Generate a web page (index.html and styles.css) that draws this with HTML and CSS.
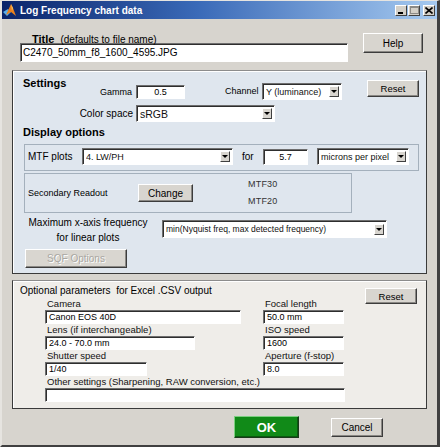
FILE: index.html
```html
<!DOCTYPE html>
<html>
<head>
<meta charset="utf-8">
<title>Log Frequency chart data</title>
<link rel="stylesheet" href="styles.css">
</head>
<body>
<div class="window">
  <div class="titlebar">
    <svg class="app-icon" width="14" height="14" viewBox="0 0 14 14">
      <polygon points="0,9 5,6 8,9 4,13" fill="#5aaee8"/>
      <polygon points="3,12 8,1 10,5 13,13 8,9" fill="#e8801e"/>
      <polygon points="8,1 10,5 9,8" fill="#f8c060"/>
    </svg>
    <span class="title-text">Log Frequency chart data</span>
    <div class="wctrls">
      <span class="wbtn wmin"><svg width="8" height="8" viewBox="0 0 8 8"><rect x="1" y="6" width="5" height="2" fill="#000"/></svg></span>
      <span class="wbtn wmax"><svg width="9" height="8" viewBox="0 0 9 8"><rect x="0.5" y="0.5" width="8" height="7" fill="none" stroke="#8c8a86"/><rect x="0" y="0" width="9" height="2" fill="#8c8a86"/></svg></span>
      <span class="wbtn wclose"><svg width="8" height="7" viewBox="0 0 8 7"><path d="M0.5 0.5 L7.5 6.5 M7.5 0.5 L0.5 6.5" stroke="#000" stroke-width="1.6"/></svg></span>
    </div>
  </div>

  <div class="top">
    <div class="title-col">
      <div class="title-label"><span class="bold-h">Title</span><span class="title-hint">(defaults to file name)</span></div>
      <div class="field title-in">C2470_50mm_f8_1600_4595.JPG</div>
    </div>
    <button class="btn help-btn">Help</button>
  </div>

  <div class="panel settings">
    <div class="row r1">
      <div class="bold-h settings-h">Settings</div>
      <span class="lbl gamma-lbl">Gamma</span>
      <div class="field gamma-in">0.5</div>
      <span class="lbl channel-lbl">Channel</span>
      <div class="select channel-sel"><span class="sel-text">Y (luminance)</span><span class="arrow"></span></div>
      <button class="btn reset1">Reset</button>
    </div>
    <div class="row r2">
      <span class="lbl cs-lbl">Color space</span>
      <div class="select cs-sel"><span class="sel-text">sRGB</span><span class="arrow"></span></div>
    </div>
    <div class="bold-h display-h">Display options</div>
    <div class="box mtf-box">
      <span class="lbl mtf-lbl">MTF plots</span>
      <div class="select mtf-sel"><span class="sel-text">4. LW/PH</span><span class="arrow"></span></div>
      <span class="lbl for-lbl">for</span>
      <div class="field pix-in">5.7</div>
      <div class="select unit-sel"><span class="sel-text">microns per pixel</span><span class="arrow"></span></div>
    </div>
    <div class="box sec-box">
      <span class="lbl sec-lbl">Secondary Readout</span>
      <button class="btn change-btn">Change</button>
      <div class="mtf-read">
        <span>MTF30</span>
        <span>MTF20</span>
      </div>
    </div>
    <div class="row maxrow">
      <div class="lbl max-lbl">Maximum x-axis frequency<br>for linear plots</div>
      <div class="select max-sel"><span class="sel-text">min(Nyquist freq, max detected frequency)</span><span class="arrow"></span></div>
    </div>
    <button class="btn sqf-btn" disabled>SQF Options</button>
  </div>

  <div class="panel optional">
    <div class="opt-head">Optional parameters&nbsp; for Excel .CSV output</div>
    <button class="btn reset2">Reset</button>
    <div class="fld f-camera"><span class="flbl">Camera</span><div class="field fin w-camera">Canon EOS 40D</div></div>
    <div class="fld f-focal"><span class="flbl">Focal length</span><div class="field fin w-right">50.0 mm</div></div>
    <div class="fld f-lens"><span class="flbl">Lens (if interchangeable)</span><div class="field fin w-lens">24.0 - 70.0 mm</div></div>
    <div class="fld f-iso"><span class="flbl">ISO speed</span><div class="field fin w-right">1600</div></div>
    <div class="fld f-shutter"><span class="flbl">Shutter speed</span><div class="field fin w-shutter">1/40</div></div>
    <div class="fld f-aperture"><span class="flbl">Aperture (f-stop)</span><div class="field fin w-right">8.0</div></div>
    <div class="fld f-other"><span class="flbl">Other settings (Sharpening, RAW conversion, etc.)</span><div class="field fin w-other"></div></div>
  </div>

  <div class="actions">
    <button class="btn ok-btn">OK</button>
    <button class="btn cancel-btn">Cancel</button>
  </div>
</div>
</body>
</html>
```

FILE: styles.css
```css
* { box-sizing: border-box; }

body {
  margin: 0;
  font-family: "Liberation Sans", Arial, sans-serif;
  color: #000;
  background: #d6d3cd;
}

.window {
  width: 440px;
  height: 447px;
  background: #d7d4ce;
  border-style: solid;
  border-width: 1px 3px 2px 2px;
  border-color: #e6e4e0 #404040 #404040 #e6e4e0;
  overflow: hidden;
}

/* title bar */
.titlebar {
  height: 18px;
  display: flex;
  align-items: center;
  background: linear-gradient(to right, #0a246a 0%, #3a6ab8 45%, #a6caf0 100%);
}
.app-icon { margin-left: 1px; flex: none; }
.title-text {
  margin-left: 3px;
  color: #fff;
  font-weight: bold;
  font-size: 10px;
  white-space: nowrap;
}
.wctrls {
  margin-left: auto;
  margin-right: 2px;
  display: flex;
}
.wbtn {
  width: 12px;
  height: 11px;
  background: #d4d0c8;
  border: 1px solid;
  border-color: #fff #404040 #404040 #fff;
  display: flex;
  align-items: center;
  justify-content: center;
}
.wmax { margin-left: 1px; }
.wclose { margin-left: 3px; }

/* generic controls */
.field {
  background: #fff;
  border: 1px solid;
  border-color: #6e6e6e #fff #fff #6e6e6e;
  box-shadow: inset 1px 1px 0 #2e2e2e;
  font-size: 9px;
  line-height: 12px;
  padding-left: 3px;
  white-space: nowrap;
  overflow: hidden;
}
.btn {
  font-family: "Liberation Sans", Arial, sans-serif;
  font-size: 10px;
  color: #000;
  background: #d8d5cf;
  border: 1px solid;
  border-color: #fff #3c3c3c #3c3c3c #fff;
  box-shadow: inset -1px -1px 0 #8a8884;
  padding: 0;
  margin: 0;
}
.select {
  background: #fff;
  border: 1px solid;
  border-color: #6e6e6e #fff #fff #6e6e6e;
  box-shadow: inset 1px 1px 0 #2e2e2e;
  display: flex;
  align-items: center;
  padding: 0 2px 0 3px;
}
.sel-text {
  flex: 1;
  font-size: 9px;
  white-space: nowrap;
  overflow: hidden;
  color: #111;
}
.arrow {
  flex: none;
  width: 10px;
  height: 11px;
  background: #d8d5cf;
  border: 1px solid;
  border-color: #fff #404040 #404040 #fff;
  display: flex;
  align-items: center;
  justify-content: center;
}
.arrow::after {
  content: "";
  border-left: 3px solid transparent;
  border-right: 3px solid transparent;
  border-top: 3px solid #000;
}
.lbl { font-size: 9px; white-space: nowrap; }
.bold-h { font-weight: bold; font-size: 11px; line-height: 13px; }

/* top row */
.top {
  height: 51px;
  display: flex;
  align-items: flex-start;
  padding: 10px 0 0 18px;
}
.title-col { width: 328px; }
.title-label { height: 14px; padding-left: 12px; white-space: nowrap; }
.title-hint { font-size: 10px; margin-left: 6px; }
.title-in { height: 19px; font-size: 10px; line-height: 17px; padding-left: 2px; }
.help-btn { width: 60px; height: 20px; margin: 4px 0 0 15px; }

/* panels */
.panel {
  margin-left: 10px;
  width: 415px;
  border: 1px solid;
}
.settings {
  height: 204px;
  background: #dfe6ee;
  border-color: #8c8c8c #3a3a3a #3a3a3a #3a3a3a;
  box-shadow: inset 1px 1px 0 #fff;
  padding-top: 6px;
}
.row { display: flex; align-items: flex-start; }
.r1 { height: 23px; }
.settings-h { width: 60px; margin-left: 10px; }
.gamma-lbl { width: 49px; text-align: right; margin-top: 8px; line-height: 14px; }
.gamma-in { width: 49px; height: 14px; margin: 8px 0 0 4px; text-align: center; padding-left: 0; }
.channel-lbl { width: 33px; margin: 6px 0 0 40px; line-height: 17px; }
.channel-sel { width: 80px; height: 17px; margin: 6px 0 0 4px; }
.reset1 { width: 52px; height: 17px; margin: 3px 0 0 25px; font-size: 9.5px; }

.r2 { margin-top: 5px; height: 17px; }
.cs-lbl { width: 120px; text-align: right; font-size: 10px; line-height: 17px; }
.cs-sel { width: 139px; height: 17px; margin-left: 3px; }
.cs-sel .sel-text { font-size: 10.5px; }

.display-h { margin: 4px 0 0 10px; }

.box {
  margin-left: 11px;
  border: 1px solid #a4b0bc;
  display: flex;
  align-items: flex-start;
}
.mtf-box { width: 395px; height: 27px; margin-top: 5px; padding: 3px 0 0 3px; }
.mtf-lbl { width: 54px; font-size: 10px; line-height: 17px; }
.mtf-sel { width: 151px; height: 17px; }
.for-lbl { width: 21px; margin-left: 9px; font-size: 10px; line-height: 17px; }
.pix-in { width: 45px; height: 16px; margin-top: 1px; text-align: center; padding-left: 0; line-height: 14px; }
.unit-sel { width: 92px; height: 17px; margin-left: 9px; }

.sec-box { width: 328px; height: 40px; margin-top: 2px; align-items: center; padding-left: 3px; }
.sec-lbl { width: 110px; }
.change-btn { width: 55px; height: 18px; }
.mtf-read { margin-left: 55px; display: flex; flex-direction: column; font-size: 9px; line-height: 17px; color: #333; letter-spacing: 0.2px; }

.maxrow { margin-top: 2px; height: 32px; }
.max-lbl { width: 120px; margin-left: 15px; text-align: center; font-size: 10px; line-height: 15px; }
.max-sel { width: 225px; height: 18px; margin: 5px 0 0 14px; }
.max-sel .sel-text { font-size: 8.5px; }

.sqf-btn {
  display: block;
  width: 102px;
  height: 19px;
  margin: 2px 0 0 12px;
  color: #a9a7a2;
  text-shadow: 1px 1px 0 #fff;
  background: #d9d6d0;
}

.optional {
  margin-top: 6px;
  height: 129px;
  background: #efede9;
  border-color: #8c8c8c #3a3a3a #3a3a3a #3a3a3a;
  box-shadow: inset 1px 1px 0 #fff;
  display: grid;
  grid-template-columns: 32px 218px 102px 52px;
  grid-template-rows: 17px 26px 26px 26px 26px;
}
.opt-head {
  grid-column: 1 / 4;
  grid-row: 1;
  padding: 3px 0 0 7px;
  font-size: 10px;
  line-height: 13px;
  white-space: nowrap;
}
.reset2 {
  grid-column: 4;
  grid-row: 1 / 3;
  align-self: start;
  width: 52px;
  height: 16px;
  margin-top: 7px;
  font-size: 9.5px;
}
.fld { display: flex; flex-direction: column; }
.flbl { font-size: 9.5px; line-height: 12px; height: 12px; white-space: nowrap; padding-left: 2px; color: #111; }
.fin { height: 14px; font-size: 9px; line-height: 12px; }
.f-camera { grid-column: 2; grid-row: 2; }
.f-focal { grid-column: 3; grid-row: 2; }
.f-lens { grid-column: 2; grid-row: 3; }
.f-iso { grid-column: 3; grid-row: 3; }
.f-shutter { grid-column: 2; grid-row: 4; }
.f-aperture { grid-column: 3; grid-row: 4; }
.f-other { grid-column: 2 / 5; grid-row: 5; }
.w-camera { width: 196px; }
.w-lens { width: 150px; }
.w-shutter { width: 102px; }
.w-right { width: 81px; }
.w-other { width: 300px; }

.actions { display: flex; align-items: flex-start; margin-top: 7px; padding-left: 232px; }
.ok-btn {
  width: 65px;
  height: 22px;
  background: #118a18;
  color: #fff;
  font-weight: bold;
  font-size: 13px;
  border-color: #7ccf80 #1a3a1a #1a3a1a #7ccf80;
  box-shadow: inset -1px -1px 0 #0a5a10;
}
.cancel-btn { width: 52px; height: 19px; margin: 2px 0 0 32px; }
```
